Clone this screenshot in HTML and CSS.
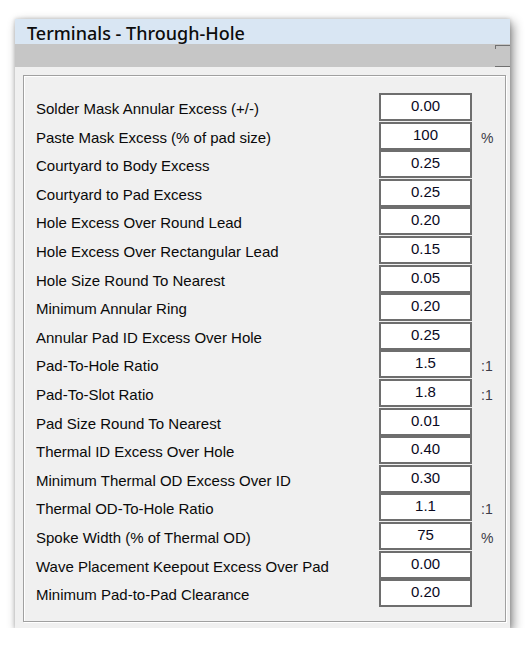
FILE: index.html
```html
<!DOCTYPE html>
<html lang="en">
<head>
  <meta charset="UTF-8" />
  <meta name="viewport" content="width=device-width, initial-scale=1.0"/>
  <title>Terminals - Through-Hole</title>
  <link rel="stylesheet" href="styles.css">
</head>
<body>
  <div class="window">
    <div class="titlebar">Terminals - Through-Hole</div>
    <div class="toolbar"><span class="tab-edge"></span></div>

    <div class="content">
      <div class="group">
        <div class="row"><span class="label">Solder Mask Annular Excess (+/-)</span><span class="field">0.00</span><span class="unit"></span></div>
        <div class="row"><span class="label">Paste Mask Excess (% of pad size)</span><span class="field">100</span><span class="unit">%</span></div>
        <div class="row"><span class="label">Courtyard to Body Excess</span><span class="field">0.25</span><span class="unit"></span></div>
        <div class="row"><span class="label">Courtyard to Pad Excess</span><span class="field">0.25</span><span class="unit"></span></div>
        <div class="row"><span class="label">Hole Excess Over Round Lead</span><span class="field">0.20</span><span class="unit"></span></div>
        <div class="row"><span class="label">Hole Excess Over Rectangular Lead</span><span class="field">0.15</span><span class="unit"></span></div>
        <div class="row"><span class="label">Hole Size Round To Nearest</span><span class="field">0.05</span><span class="unit"></span></div>
        <div class="row"><span class="label">Minimum Annular Ring</span><span class="field">0.20</span><span class="unit"></span></div>
        <div class="row"><span class="label">Annular Pad ID Excess Over Hole</span><span class="field">0.25</span><span class="unit"></span></div>
        <div class="row"><span class="label">Pad-To-Hole Ratio</span><span class="field">1.5</span><span class="unit">:1</span></div>
        <div class="row"><span class="label">Pad-To-Slot Ratio</span><span class="field">1.8</span><span class="unit">:1</span></div>
        <div class="row"><span class="label">Pad Size Round To Nearest</span><span class="field">0.01</span><span class="unit"></span></div>
        <div class="row"><span class="label">Thermal ID Excess Over Hole</span><span class="field">0.40</span><span class="unit"></span></div>
        <div class="row"><span class="label">Minimum Thermal OD Excess Over ID</span><span class="field">0.30</span><span class="unit"></span></div>
        <div class="row"><span class="label">Thermal OD-To-Hole Ratio</span><span class="field">1.1</span><span class="unit">:1</span></div>
        <div class="row"><span class="label">Spoke Width (% of Thermal OD)</span><span class="field">75</span><span class="unit">%</span></div>
        <div class="row"><span class="label">Wave Placement Keepout Excess Over Pad</span><span class="field">0.00</span><span class="unit"></span></div>
        <div class="row"><span class="label">Minimum Pad-to-Pad Clearance</span><span class="field">0.20</span><span class="unit"></span></div>
      </div>
    </div>
  </div>
</body>
</html>
```

FILE: styles.css
```css
body {
  margin: 0;
  padding: 0;
  background: #fff;
  font-family: 'Liberation Sans', Arial, sans-serif;
  color: #000;
}

.window {
  width: 495px;
  height: 609px;
  margin: 19px 0 0 15px;
  background: #f0f0f0;
  box-shadow: 3px 4px 10px rgba(0, 0, 0, 0.45), 0 0 4px rgba(0, 0, 0, 0.2);
  display: flex;
  flex-direction: column;
}

.titlebar {
  height: 25px;
  background: #d9e6f3;
  padding-left: 12px;
  font-family: 'Noto Sans', sans-serif;
  font-size: 18px;
  font-weight: 500;
  line-height: 28px;
  color: #0c0c0c;
}

.toolbar {
  height: 23px;
  background: #c6c6c6;
  position: relative;
}

/* clipped edge of the strip on the right */
.tab-edge {
  position: absolute;
  right: 0;
  top: 1px;
  width: 15px;
  height: 20px;
  border-top: 1px solid #707070;
  border-bottom: 1px solid #707070;
}

.tab-edge::before {
  content: "";
  position: absolute;
  left: 0;
  top: 0;
  width: 1px;
  height: 3px;
  background: #707070;
}

.content {
  flex: 1;
  padding: 8px 4px 6px 8px;
  display: flex;
}

.group {
  flex: 1;
  border: 1px solid #a0a0a0;
  box-shadow: inset 1px 1px 0 #fff, 1px 1px 0 #fff;
  padding: 17px 0 0 12px;
  display: grid;
  grid-template-columns: 343px 93px auto;
  grid-auto-rows: 28.6px;
  align-content: start;
}

.row {
  display: contents;
}

.label {
  font-size: 15px;
  line-height: 31px;
  color: #0a0a0a;
}

.field {
  height: 28px;
  box-sizing: border-box;
  border: 2px solid #6e6e6e;
  background: #fff;
  text-align: center;
  font-size: 15px;
  line-height: 21px;
  color: #0a0a1e;
}

.unit {
  padding-left: 9px;
  font-size: 14px;
  line-height: 32px;
  color: #3c3c48;
}
```
